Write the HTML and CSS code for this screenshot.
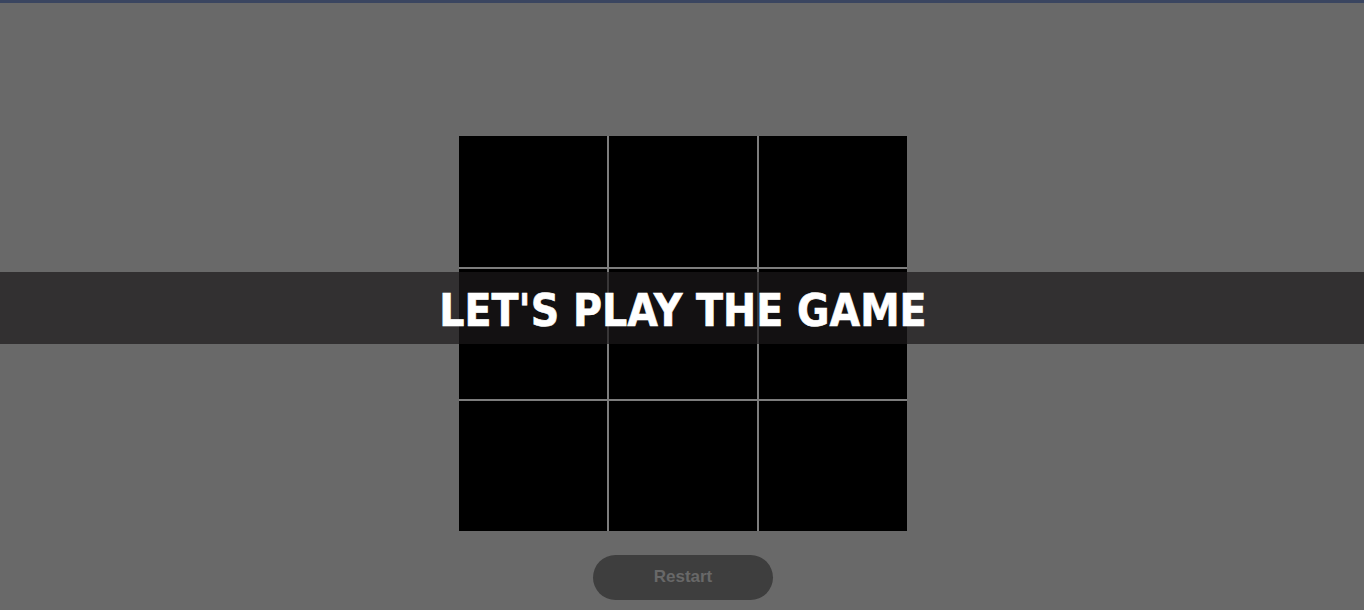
FILE: index.html
```html
<!DOCTYPE html>
<html lang="en">
<head>
<meta charset="utf-8">
<title>Tic Tac Toe</title>
<link rel="stylesheet" href="styles.css">
</head>
<body>
<div class="topbar"></div>
<main class="game">
  <div class="board">
    <div class="cell"></div><div class="cell"></div><div class="cell"></div>
    <div class="cell"></div><div class="cell"></div><div class="cell"></div>
    <div class="cell"></div><div class="cell"></div><div class="cell"></div>
  </div>
  <button class="restart">Restart</button>
</main>
<div class="banner"><h1 class="banner-text">LET'S PLAY THE GAME</h1></div>
</body>
</html>
```
FILE: styles.css
```css
html, body {
  margin: 0;
  padding: 0;
  height: 100%;
}
body {
  background: #696969;
  font-family: "Liberation Sans", Arial, sans-serif;
  overflow: hidden;
}
.topbar {
  height: 3px;
  background: #3a4560;
}
.game {
  display: flex;
  flex-direction: column;
  align-items: center;
  padding-top: 133px;
  padding-left: 2px;
}
.board {
  display: grid;
  grid-template-columns: 148px 148px 148px;
  grid-template-rows: 131px 130px 130px;
  gap: 2px;
  background: #7d7d7d;
}
.cell {
  background: #000;
}
.restart {
  margin-top: 24px;
  width: 180px;
  height: 45px;
  border: none;
  border-radius: 23px;
  background: #3e3e3e;
  color: #686868;
  font-family: "Liberation Sans", Arial, sans-serif;
  font-weight: bold;
  font-size: 17px;
  padding: 0 0 2px 0;
}
.banner {
  position: absolute;
  left: 0;
  right: 0;
  top: 272px;
  height: 72px;
  background: rgba(27, 24, 26, 0.705);
  display: flex;
  align-items: center;
  justify-content: center;
}
.banner-text {
  margin: 0;
  padding: 6px 0 0 2px;
  color: #fff;
  font-family: "DejaVu Sans Condensed", "DejaVu Sans", sans-serif;
  font-weight: bold;
  font-size: 44px;
  line-height: 1;
  letter-spacing: 0;
  -webkit-text-stroke: 0.6px #fff;
}
```
